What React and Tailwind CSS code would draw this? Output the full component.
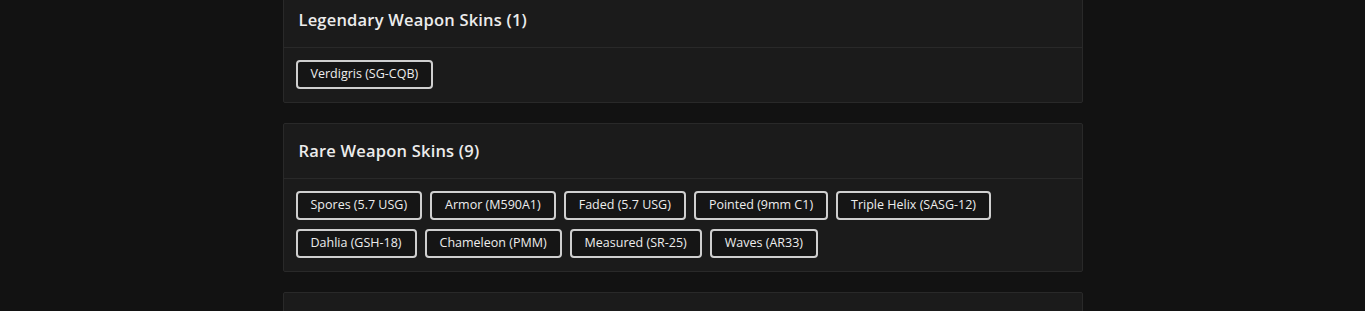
const sections = [
  { title: 'Legendary Weapon Skins (1)', skins: ['Verdigris (SG-CQB)'] },
  {
    title: 'Rare Weapon Skins (9)',
    skins: [
      'Spores (5.7 USG)',
      'Armor (M590A1)',
      'Faded (5.7 USG)',
      'Pointed (9mm C1)',
      'Triple Helix (SASG-12)',
      'Dahlia (GSH-18)',
      'Chameleon (PMM)',
      'Measured (SR-25)',
      'Waves (AR33)',
    ],
  },
  { title: '', skins: [] },
];

function SkinCard({ title, skins }) {
  return (
    <div className="border border-[#292929] bg-[#1b1b1b] rounded-[2px]">
      <div className="h-[55px] flex items-center px-[15px] border-b border-[#292929]">
        <h3 className="text-[16.5px] font-semibold text-[#ececec] tracking-[0.2px]">{title}</h3>
      </div>
      {skins.length > 0 && (
        <div className="px-3 pt-3 pb-[13px] flex flex-wrap gap-x-[8px] gap-y-[9px]">
          {skins.map((s) => (
            <button
              key={s}
              className="h-[29px] px-[13px] border-2 border-[#cfcfcf] rounded-[4px] bg-[#151515] text-[12.5px] text-[#ededed] leading-none"
            >
              {s}
            </button>
          ))}
        </div>
      )}
    </div>
  );
}

export default function App() {
  return (
    <div className="h-[311px] bg-[#121212] overflow-hidden" style={{ fontFamily: '"Open Sans", "Noto Sans", sans-serif' }}>
      <div className="w-[800px] mx-auto mt-[-8px] flex flex-col gap-5">
        {sections.map((s, i) => (
          <SkinCard key={i} {...s} />
        ))}
      </div>
    </div>
  );
}
